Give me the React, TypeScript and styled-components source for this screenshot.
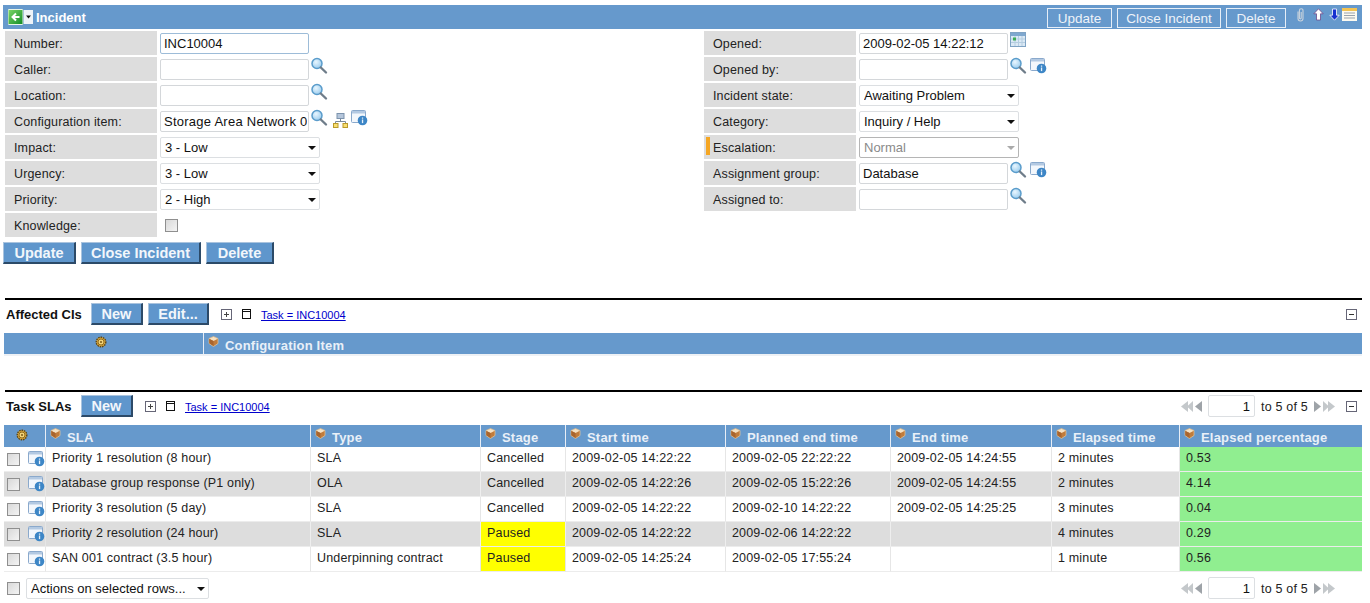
import React from 'react';
import styled, { createGlobalStyle } from 'styled-components';

const GlobalStyle = createGlobalStyle`
  html, body {
    margin: 0;
    padding: 0;
    background: #fff;
    overflow: hidden;
  }
  body {
    font-family: "Liberation Sans", Arial, sans-serif;
    font-size: 13px;
    color: #222;
  }
  * { box-sizing: border-box; }
`;

const BLUE = '#6699cc';
const GRAY = '#dddddd';

const Page = styled.div`
  width: 1370px;
  height: 603px;
  padding: 5px 8px 0 3px;
`;

const HeaderBar = styled.div`
  height: 24px;
  background: ${BLUE};
  display: flex;
  align-items: center;
  padding: 0 5px 0 5px;
`;

const HeaderTitle = styled.span`
  color: #fff;
  font-weight: bold;
  font-size: 13px;
  margin-left: 2px;
`;

const HeaderActions = styled.div`
  margin-left: auto;
  display: flex;
  align-items: center;
  height: 100%;
`;

const HeaderButton = styled.button`
  height: 20px;
  margin: 2px 5px 0 0;
  padding: 0;
  width: ${p => p.$w}px;
  border: 1px solid #e6eef7;
  background: transparent;
  color: #eef3f9;
  font: 13.5px "Liberation Sans", Arial, sans-serif;
`;

const HeaderIcons = styled.div`
  display: flex;
  align-items: flex-start;
  height: 100%;
  padding-top: 3px;
  margin-left: 4px;
`;

const FormGrid = styled.div`
  display: flex;
  padding: 2px 0 0 2px;
`;

const FormColumn = styled.div`
  width: 699px;
  flex: none;
  display: flex;
  flex-direction: column;
  gap: 2px;
`;

const FieldRow = styled.div`
  display: flex;
  height: 24px;
`;

const FieldLabel = styled.label`
  position: relative;
  width: 152px;
  flex: none;
  background: ${GRAY};
  padding-left: 9px;
  line-height: 26px;
  font-size: 12.5px;
  letter-spacing: 0.15px;
  color: #222;
`;

const Flag = styled.span`
  position: absolute;
  left: 2px;
  top: 2px;
  width: 4px;
  height: 18px;
  background: #f5a623;
`;

const FieldValue = styled.div`
  display: flex;
  align-items: flex-start;
  padding: 2px 0 0 3px;
`;

const TextInput = styled.input`
  width: 149px;
  height: 21px;
  padding: 0 1px 0 3px;
  border: 1px solid ${p => (p.$focus ? '#9dbcd8' : '#d4d7da')};
  border-radius: 2px;
  background: #fff;
  font: 13px "Liberation Sans", Arial, sans-serif;
  letter-spacing: ${p => p.$spread || 0}px;
  color: #111;
  outline: none;
`;

const SelectWrap = styled.div`
  position: relative;
  width: ${p => p.$w || 160}px;
  height: 21px;
`;

const Select = styled.select`
  appearance: none;
  width: 100%;
  height: 100%;
  padding: 0 0 0 4px;
  border: 1px solid ${p => (p.disabled ? '#b5b5b5' : '#dcdfe2')};
  border-radius: 2px;
  background: #fff;
  font: 13px "Liberation Sans", Arial, sans-serif;
  color: ${p => (p.disabled ? '#8a8a8a' : '#111')};
  opacity: 1;
`;

const Caret = styled.span`
  position: absolute;
  right: 4px;
  top: 9px;
  border-left: 4px solid transparent;
  border-right: 4px solid transparent;
  border-top: 4px solid ${p => (p.$muted ? '#aaa' : '#111')};
  pointer-events: none;
`;

const Check = styled.input.attrs({ type: 'checkbox' })`
  appearance: none;
  width: 13px;
  height: 13px;
  margin: 0;
  flex: none;
  border: 1px solid #8f8f8f;
  background: linear-gradient(135deg, #d9d9d9, #f4f4f4);
`;

const KnowledgeCheck = styled(Check)`
  margin: 4px 0 0 5px;
`;

const IconSlot = styled.span`
  display: inline-flex;
  margin-left: ${p => p.$ml ?? 2}px;
  margin-top: ${p => p.$mt ?? 0}px;
`;

const Buttons = styled.div`
  display: flex;
  gap: 5px;
  padding-top: 5px;
`;

const ActionButton = styled.button`
  width: ${p => p.$w}px;
  height: 22px;
  padding: 0;
  background: #5f96cc;
  border: 2px solid;
  border-color: #a9c3de #2c4a68 #2c4a68 #a9c3de;
  border-top-width: 1px;
  border-left-width: 1px;
  color: #f2f6fb;
  font: bold 14.5px "Liberation Sans", Arial, sans-serif;
`;

const Section = styled.section`
  margin: ${p => p.$mt}px 0 0 2px;
  border-top: 2px solid #000;
`;

const SectionBar = styled.div`
  display: flex;
  align-items: center;
  height: 22px;
  margin-top: 3px;
  padding-left: 1px;
`;

const SectionTitle = styled.span`
  font-weight: bold;
  font-size: 13px;
  padding-top: 1px;
  color: #111;
  width: ${p => p.$w}px;
`;

const SectionButtons = styled.div`
  display: flex;
  gap: 5px;
`;

const FilterLink = styled.a`
  margin-left: 10px;
  font-size: 11px;
  padding-top: 1px;
  color: #0000cc;
  text-decoration: underline;
`;

const PushRight = styled.div`
  margin-left: auto;
  display: flex;
  align-items: center;
  height: 100%;
`;

const Pager = styled.div`
  display: flex;
  align-items: center;
  height: 22px;
  margin-right: ${p => p.$mr}px;
`;

const PageInput = styled.input`
  width: 47px;
  height: 22px;
  margin: 0 6px;
  padding: 0 4px 0 0;
  border: 1px solid #dcdfe2;
  border-radius: 2px;
  text-align: right;
  font: 13px "Liberation Sans", Arial, sans-serif;
  color: #111;
`;

const PagerText = styled.span`
  font-size: 12.5px;
  letter-spacing: 0.2px;
  padding-top: 1px;
  color: #222;
  margin-right: 6px;
`;

const GridTable = styled.table`
  width: 1358px;
  margin: ${p => p.$mt}px 0 0 -1px;
  border-collapse: separate;
  border-spacing: 0;
  table-layout: fixed;
`;

const Th = styled.th`
  position: relative;
  height: ${p => p.$h}px;
  padding: 3px 0 0 21px;
  background: ${BLUE};
  border-right: 1px solid #e8eef6;
  color: #e9f0f8;
  font: bold 13px "Liberation Sans", Arial, sans-serif;
  letter-spacing: 0.2px;
  text-align: left;
  &:last-child { border-right: 0; }
`;

const ThIcon = styled.th`
  height: ${p => p.$h}px;
  padding: 0 5px 0 0;
  background: ${BLUE};
  border-right: 1px solid #e8eef6;
  text-align: center;
  vertical-align: middle;
`;

const CubeSlot = styled.span`
  position: absolute;
  left: 4px;
  top: 3px;
  display: flex;
`;

const Tr = styled.tr`
  background: ${p => (p.$alt ? GRAY : '#fff')};
`;

const Td = styled.td`
  height: 25px;
  padding: 0 0 2px 6px;
  border-right: 1px solid ${p => (p.$alt ? '#eeeeee' : '#e6e6e6')};
  border-bottom: 1px solid #ececec;
  background: ${p => p.$bg || 'transparent'};
  font-size: 12.5px;
  letter-spacing: 0.17px;
  color: #222;
  white-space: nowrap;
  overflow: hidden;
  &:last-child { border-right: 0; }
`;

const ToolCell = styled.td`
  height: 25px;
  padding: 0;
  border-right: 1px solid #e6e6e6;
  border-bottom: 1px solid #ececec;
`;

const ToolInner = styled.div`
  display: flex;
  align-items: center;
  padding-left: 3px;
  gap: 8px;
`;

const EmptyStrip = styled.div`
  height: 2px;
  background: #eef1f5;
  width: 1358px;
  margin-left: -1px;
`;

const Footer = styled.div`
  display: flex;
  align-items: center;
  height: 22px;
  margin: 5px 0 0 2px;
  gap: 6px;
`;

/* ---- icons ---- */

const BackIcon = () => (
  <svg width="26" height="16" viewBox="0 0 26 16">
    <defs>
      <linearGradient id="bk" x1="0" y1="0" x2="1" y2="1">
        <stop offset="0" stopColor="#7fd86a" />
        <stop offset="1" stopColor="#0f8a25" />
      </linearGradient>
    </defs>
    <rect x="0" y="0.5" width="15" height="15" rx="1" fill="url(#bk)" stroke="#e9f5e6" />
    <path d="M11.5 8H5M8 4.5 4.5 8 8 11.5" fill="none" stroke="#fff" strokeWidth="2" />
    <rect x="16" y="1" width="9" height="14" fill="#eef3f8" />
    <path d="M18 6.5h5L20.500 9.500z" fill="#111" />
  </svg>
);

const Magnifier = () => (
  <svg width="18" height="18" viewBox="0 0 18 18">
    <defs>
      <radialGradient id="mg" cx="0.4" cy="0.35" r="0.8">
        <stop offset="0" stopColor="#e8f6ff" />
        <stop offset="1" stopColor="#8cc4ea" />
      </radialGradient>
    </defs>
    <circle cx="7" cy="6.500" r="5" fill="url(#mg)" stroke="#5a9ccb" strokeWidth="1.500" />
    <path d="M10.800 10.500 16 15.500" stroke="#6f7d8a" strokeWidth="2.400" strokeLinecap="round" />
  </svg>
);

const InfoWindow = () => (
  <svg width="17" height="16" viewBox="0 0 17 16">
    <rect x="0.500" y="0.500" width="14" height="12" rx="1" fill="#f3f7fc" stroke="#8aa9cc" />
    <rect x="1" y="1" width="13" height="2.500" fill="#b3c9e2" />
    <circle cx="11.500" cy="10.500" r="4.800" fill="#3d86c6" />
    <rect x="10.900" y="9.500" width="1.300" height="3.600" fill="#e6f0fa" />
    <rect x="10.900" y="7.500" width="1.300" height="1.200" fill="#e6f0fa" />
  </svg>
);

const TreeIcon = () => (
  <svg width="15" height="15" viewBox="0 0 15 15">
    <rect x="4" y="0.500" width="7" height="5" fill="#b5c6db" stroke="#7c93ad" />
    <path d="M7.500 5.500v3M2.500 10.500v-2h10v2" fill="none" stroke="#7a8a9c" />
    <rect x="0.500" y="10.500" width="4.500" height="4" fill="#f8de72" stroke="#b99a2a" />
    <rect x="10" y="10.500" width="4.500" height="4" fill="#f8de72" stroke="#b99a2a" />
  </svg>
);

const CalendarIcon = () => (
  <svg width="16" height="15" viewBox="0 0 16 15">
    <rect x="0.500" y="0.500" width="15" height="14" fill="#dbe9f5" stroke="#7fa3c4" />
    <rect x="1" y="1" width="14" height="3" fill="#7fa8cf" />
    <path d="M1 7h14M1 10.500h14M5 4v10M8.500 4v10M12 4v10" stroke="#b5cde0" />
    <rect x="3" y="5.500" width="3" height="3" fill="#3cad55" />
  </svg>
);

const Cube = () => (
  <svg width="11" height="11" viewBox="0 0 11 11">
    <path d="M5.500 0.500 10 2.500 10 7.500 5.500 10.500 1 7.500 1 2.500z" fill="#c07c3c" stroke="#e8c89a" strokeWidth="0.700" strokeLinejoin="round" />
    <path d="M5.500 0.800 9.800 2.800 5.500 5 1.200 2.800z" fill="#f5e2c4" />
    <path d="M5.500 5v5L1.300 7.300V3z" fill="#a9652e" />
  </svg>
);

const Gear = () => (
  <svg width="12" height="12" viewBox="0 0 12 12">
    <circle cx="6" cy="6" r="4.800" fill="#d8a63a" stroke="#5e4510" strokeWidth="1.400" strokeDasharray="1.500 0.900" />
    <circle cx="6" cy="6" r="3" fill="#f2d478" stroke="#8a6518" strokeWidth="0.900" />
    <circle cx="6" cy="6" r="1" fill="#7c5a14" />
  </svg>
);

const PlusBox = () => (
  <svg width="11" height="11" viewBox="0 0 11 11">
    <rect x="0.500" y="0.500" width="10" height="10" fill="#fff" stroke="#667" />
    <path d="M3 5.500h5M5.500 3v5" stroke="#444" />
  </svg>
);

const MinusBox = () => (
  <svg width="11" height="11" viewBox="0 0 11 11">
    <rect x="0.500" y="0.500" width="10" height="10" fill="#fff" stroke="#667" />
    <path d="M3 5.500h5" stroke="#333" />
  </svg>
);

const DocBox = () => (
  <svg width="9" height="10" viewBox="0 0 9 10">
    <rect x="0.500" y="0.500" width="8" height="9" fill="#fff" stroke="#111" />
    <path d="M0 2.500h9" stroke="#111" />
  </svg>
);

const Paperclip = () => (
  <svg width="11" height="14" viewBox="0 0 11 14">
    <path
      d="M3 3.500v7a2.500 2.500 0 0 0 5 0v-8a1.800 1.800 0 0 0-3.600 0v7.500a.8.8 0 0 0 1.800 0V4"
      fill="none"
      stroke="#c9d3dd"
      strokeWidth="1.100"
    />
  </svg>
);

const ArrowUp = () => (
  <svg width="11" height="13" viewBox="0 0 11 13">
    <path d="M5.500 .8 10.200 5.800H7.500V12H3.500V5.800H.8z" fill="#fff" stroke="#6c4a8c" strokeWidth="0.800" />
  </svg>
);

const ArrowDown = () => (
  <svg width="11" height="13" viewBox="0 0 11 13">
    <path d="M5.500 12.200 10.200 7.200H7.500V1H3.500V7.200H.8z" fill="#1530d0" stroke="#fff" strokeWidth="0.800" />
  </svg>
);

const ListIcon = () => (
  <svg width="15" height="13" viewBox="0 0 15 13">
    <rect x="0" y="0" width="15" height="13" fill="#fdfaf0" />
    <rect x="0" y="0" width="15" height="3" fill="#f3c352" />
    <path d="M2 5h11M2 7.500h11M2 10h11" stroke="#9aa3ad" />
  </svg>
);

const PageArrows = ({ dir }: { dir: 'back' | 'next' }) => (
  <svg width="22" height="13" viewBox="0 0 22 13">
    <g transform={dir === 'back' ? 'translate(22 0) scale(-1 1)' : undefined}>
      <path d="M0 1v11l7-5.500z" fill="#9ea3a8" />
      <path d="M9 1v11l6-5.500z" fill="#c4c8cb" />
      <path d="M14 1v11l7-5.500z" fill="#c4c8cb" />
    </g>
  </svg>
);

/* ---- data ---- */

const leftFields = [
  { label: 'Number:', value: 'INC10004', focus: true },
  { label: 'Caller:', value: '', icons: ['search'] },
  { label: 'Location:', value: '', icons: ['search'] },
  { label: 'Configuration item:', value: 'Storage Area Network 001', spread: 0.25, icons: ['search', 'tree', 'info'] },
  { label: 'Impact:', select: '3 - Low' },
  { label: 'Urgency:', select: '3 - Low' },
  { label: 'Priority:', select: '2 - High' },
];

const rightFields = [
  { label: 'Opened:', value: '2009-02-05 14:22:12', icons: ['calendar'] },
  { label: 'Opened by:', value: '', icons: ['search', 'info'] },
  { label: 'Incident state:', select: 'Awaiting Problem' },
  { label: 'Category:', select: 'Inquiry / Help' },
  { label: 'Escalation:', select: 'Normal', disabled: true, flag: true },
  { label: 'Assignment group:', value: 'Database', icons: ['search', 'info'] },
  { label: 'Assigned to:', value: '', icons: ['search'] },
];

const columns = [
  { name: 'SLA', width: 265 },
  { name: 'Type', width: 170 },
  { name: 'Stage', width: 85 },
  { name: 'Start time', width: 160 },
  { name: 'Planned end time', width: 165 },
  { name: 'End time', width: 161 },
  { name: 'Elapsed time', width: 128 },
  { name: 'Elapsed percentage', width: 182 },
];

const slaRows = [
  ['Priority 1 resolution (8 hour)', 'SLA', 'Cancelled', '2009-02-05 14:22:22', '2009-02-05 22:22:22', '2009-02-05 14:24:55', '2 minutes', '0.53'],
  ['Database group response (P1 only)', 'OLA', 'Cancelled', '2009-02-05 14:22:26', '2009-02-05 15:22:26', '2009-02-05 14:24:55', '2 minutes', '4.14'],
  ['Priority 3 resolution (5 day)', 'SLA', 'Cancelled', '2009-02-05 14:22:22', '2009-02-10 14:22:22', '2009-02-05 14:25:25', '3 minutes', '0.04'],
  ['Priority 2 resolution (24 hour)', 'SLA', 'Paused', '2009-02-05 14:22:22', '2009-02-06 14:22:22', '', '4 minutes', '0.29'],
  ['SAN 001 contract (3.5 hour)', 'Underpinning contract', 'Paused', '2009-02-05 14:25:24', '2009-02-05 17:55:24', '', '1 minute', '0.56'],
];

const fieldIcon = (name: string, i: number) => {
  if (name === 'search') return <IconSlot key={i} $ml={1} $mt={-2}><Magnifier /></IconSlot>;
  if (name === 'tree') return <IconSlot key={i} $ml={5} $mt={2}><TreeIcon /></IconSlot>;
  if (name === 'calendar') return <IconSlot key={i} $ml={2} $mt={-1}><CalendarIcon /></IconSlot>;
  return <IconSlot key={i} $ml={3} $mt={-1}><InfoWindow /></IconSlot>;
};

const Field = ({ field }: { field: any }) => (
  <FieldRow>
    <FieldLabel>
      {field.flag && <Flag />}
      {field.label}
    </FieldLabel>
    <FieldValue>
      {field.select ? (
        <SelectWrap>
          <Select disabled={field.disabled} defaultValue={field.select}>
            <option>{field.select}</option>
          </Select>
          <Caret $muted={field.disabled} />
        </SelectWrap>
      ) : (
        <TextInput defaultValue={field.value} $focus={field.focus} $spread={field.spread} />
      )}
      {field.icons?.map(fieldIcon)}
    </FieldValue>
  </FieldRow>
);

const stageColor = (stage: string) => (stage === 'Paused' ? '#ffff00' : undefined);

const PagerControls = ({ mr }: { mr: number }) => (
  <Pager $mr={mr}>
    <PageArrows dir="back" />
    <PageInput defaultValue="1" />
    <PagerText>to 5 of 5</PagerText>
    <PageArrows dir="next" />
  </Pager>
);

export default function App() {
  return (
    <Page>
      <GlobalStyle />
      <HeaderBar>
        <BackIcon />
        <HeaderTitle>Incident</HeaderTitle>
        <HeaderActions>
          <HeaderButton $w={65}>Update</HeaderButton>
          <HeaderButton $w={104}>Close Incident</HeaderButton>
          <HeaderButton $w={60}>Delete</HeaderButton>
          <HeaderIcons>
            <Paperclip />
            <IconSlot $ml={7}><ArrowUp /></IconSlot>
            <IconSlot $ml={5}><ArrowDown /></IconSlot>
            <IconSlot $ml={2}><ListIcon /></IconSlot>
          </HeaderIcons>
        </HeaderActions>
      </HeaderBar>

      <FormGrid>
        <FormColumn>
          {leftFields.map(f => <Field key={f.label} field={f} />)}
          <FieldRow>
            <FieldLabel>Knowledge:</FieldLabel>
            <FieldValue>
              <KnowledgeCheck />
            </FieldValue>
          </FieldRow>
        </FormColumn>
        <FormColumn>
          {rightFields.map(f => <Field key={f.label} field={f} />)}
        </FormColumn>
      </FormGrid>

      <Buttons>
        <ActionButton $w={73}>Update</ActionButton>
        <ActionButton $w={120}>Close Incident</ActionButton>
        <ActionButton $w={68}>Delete</ActionButton>
      </Buttons>

      <Section $mt={34}>
        <SectionBar>
          <SectionTitle $w={85}>Affected CIs</SectionTitle>
          <SectionButtons>
            <ActionButton $w={52}>New</ActionButton>
            <ActionButton $w={61}>Edit...</ActionButton>
          </SectionButtons>
          <IconSlot $ml={12}><PlusBox /></IconSlot>
          <IconSlot $ml={10}><DocBox /></IconSlot>
          <FilterLink href="#">Task = INC10004</FilterLink>
          <PushRight>
            <MinusBox />
            <IconSlot $ml={5} />
          </PushRight>
        </SectionBar>
        <GridTable $mt={8}>
          <colgroup>
            <col width={200} />
            <col />
          </colgroup>
          <thead>
            <tr>
              <ThIcon $h={21}><Gear /></ThIcon>
              <Th $h={21}>
                <CubeSlot><Cube /></CubeSlot>
                Configuration Item
              </Th>
            </tr>
          </thead>
        </GridTable>
        <EmptyStrip />
      </Section>

      <Section $mt={34}>
        <SectionBar>
          <SectionTitle $w={75}>Task SLAs</SectionTitle>
          <SectionButtons>
            <ActionButton $w={52}>New</ActionButton>
          </SectionButtons>
          <IconSlot $ml={12}><PlusBox /></IconSlot>
          <IconSlot $ml={10}><DocBox /></IconSlot>
          <FilterLink href="#">Task = INC10004</FilterLink>
          <PushRight>
            <PagerControls mr={10} />
            <MinusBox />
            <IconSlot $ml={5} />
          </PushRight>
        </SectionBar>
        <GridTable $mt={8}>
          <colgroup>
            <col width={42} />
            {columns.map(c => <col key={c.name} width={c.width} />)}
          </colgroup>
          <thead>
            <tr>
              <ThIcon $h={22}><Gear /></ThIcon>
              {columns.map(c => (
                <Th key={c.name} $h={22}>
                  <CubeSlot><Cube /></CubeSlot>
                  {c.name}
                </Th>
              ))}
            </tr>
          </thead>
          <tbody>
            {slaRows.map((row, r) => {
              const alt = r % 2 === 1;
              return (
                <Tr key={row[0]} $alt={alt}>
                  <ToolCell>
                    <ToolInner>
                      <Check />
                      <InfoWindow />
                    </ToolInner>
                  </ToolCell>
                  {row.map((cell, c) => (
                    <Td
                      key={c}
                      $alt={alt}
                      $bg={c === 7 ? '#90ee90' : c === 2 ? stageColor(cell) : undefined}
                    >
                      {cell}
                    </Td>
                  ))}
                </Tr>
              );
            })}
          </tbody>
        </GridTable>
        <Footer>
          <Check />
          <SelectWrap $w={183}>
            <Select defaultValue="Actions on selected rows...">
              <option>Actions on selected rows...</option>
            </Select>
            <Caret />
          </SelectWrap>
          <PushRight>
            <PagerControls mr={26} />
          </PushRight>
        </Footer>
      </Section>
    </Page>
  );
}
